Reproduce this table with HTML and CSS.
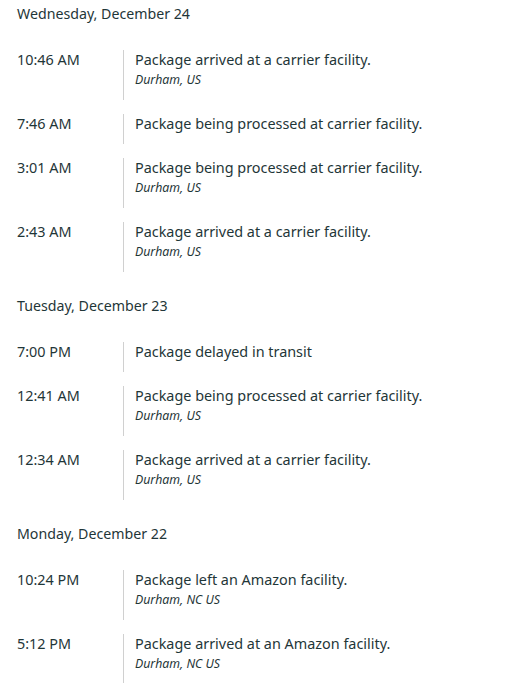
FILE: index.html
```html
<!DOCTYPE html>
<html>
<head>
<meta charset="utf-8">
<link rel="stylesheet" href="styles.css">
</head>
<body>
<div class="tracking">
  <section class="day">
    <h3 class="day-title">Wednesday, December 24</h3>
    <div class="event"><div class="time">10:46 AM</div><div class="detail"><div class="msg">Package arrived at a carrier facility.</div><div class="loc">Durham, US</div></div></div>
    <div class="event"><div class="time">7:46 AM</div><div class="detail"><div class="msg">Package being processed at carrier facility.</div></div></div>
    <div class="event"><div class="time">3:01 AM</div><div class="detail"><div class="msg">Package being processed at carrier facility.</div><div class="loc">Durham, US</div></div></div>
    <div class="event"><div class="time">2:43 AM</div><div class="detail"><div class="msg">Package arrived at a carrier facility.</div><div class="loc">Durham, US</div></div></div>
  </section>
  <section class="day">
    <h3 class="day-title">Tuesday, December 23</h3>
    <div class="event"><div class="time">7:00 PM</div><div class="detail"><div class="msg">Package delayed in transit</div></div></div>
    <div class="event"><div class="time">12:41 AM</div><div class="detail"><div class="msg">Package being processed at carrier facility.</div><div class="loc">Durham, US</div></div></div>
    <div class="event"><div class="time">12:34 AM</div><div class="detail"><div class="msg">Package arrived at a carrier facility.</div><div class="loc">Durham, US</div></div></div>
  </section>
  <section class="day">
    <h3 class="day-title">Monday, December 22</h3>
    <div class="event"><div class="time">10:24 PM</div><div class="detail"><div class="msg">Package left an Amazon facility.</div><div class="loc">Durham, NC US</div></div></div>
    <div class="event"><div class="time">5:12 PM</div><div class="detail"><div class="msg">Package arrived at an Amazon facility.</div><div class="loc">Durham, NC US</div></div></div>
  </section>
</div>
</body>
</html>
```
FILE: styles.css
```css
html, body {
  margin: 0;
  padding: 0;
  background: #ffffff;
}
body {
  font-family: "Noto Sans", "Open Sans", sans-serif;
  color: #1f3638;
  overflow: hidden;
}
.tracking {
  padding: 4px 17px 0 17px;
}
.day {
  display: flex;
  flex-direction: column;
}
.day + .day {
  padding-top: 10px;
}
.day-title {
  margin: 0 0 26px 0;
  font-size: 14.2px;
  font-weight: 400;
  line-height: 20px;
}
.event {
  display: flex;
  margin-bottom: 14px;
}
.time {
  width: 106px;
  flex: none;
  font-size: 14.4px;
  line-height: 20px;
}
.detail {
  border-left: 1px solid #d0d0d0;
  padding: 0 0 10px 11px;
}
.msg {
  font-size: 14.4px;
  line-height: 20px;
}
.loc {
  font-size: 12.3px;
  font-style: italic;
  line-height: 20px;
}
```
